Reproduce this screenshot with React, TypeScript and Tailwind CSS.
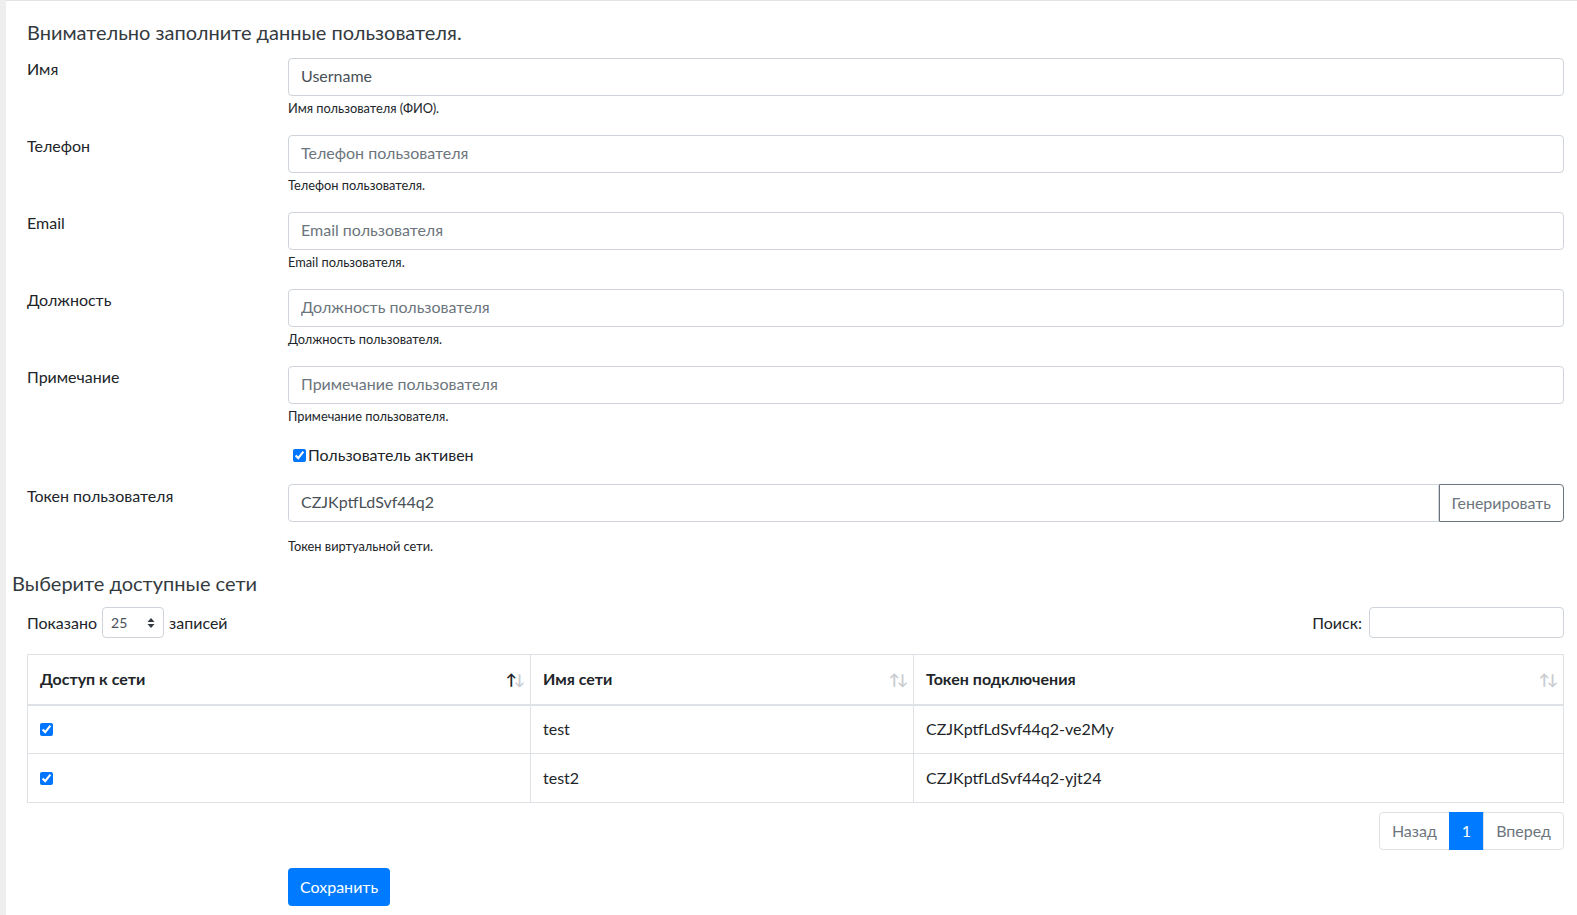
import { ReactNode } from "react";

const fields = [
  { label: "Имя", value: "Username", placeholder: "", help: "Имя пользователя (ФИО)." },
  { label: "Телефон", value: "", placeholder: "Телефон пользователя", help: "Телефон пользователя." },
  { label: "Email", value: "", placeholder: "Email пользователя", help: "Email пользователя." },
  { label: "Должность", value: "", placeholder: "Должность пользователя", help: "Должность пользователя." },
  { label: "Примечание", value: "", placeholder: "Примечание пользователя", help: "Примечание пользователя." },
];

const networks = [
  { name: "test", token: "CZJKptfLdSvf44q2-ve2My" },
  { name: "test2", token: "CZJKptfLdSvf44q2-yjt24" },
];

function SortIcon({ active }: { active?: boolean }) {
  return (
    <span className="flex text-[15px] leading-none tracking-[-3px]">
      <span className={active ? "text-[#212529]" : "text-[#c8cbcf]"}>↑</span>
      <span className="text-[#c8cbcf]">↓</span>
    </span>
  );
}

function Th({ children, active, className }: { children: ReactNode; active?: boolean; className?: string }) {
  return (
    <th className={`h-[50px] border-r border-[#dee2e6] pl-3 pr-[8px] text-left font-bold ${className ?? ""}`}>
      <div className="flex items-center justify-between">
        <span>{children}</span>
        <SortIcon active={active} />
      </div>
    </th>
  );
}

export default function App() {
  return (
    <div className="flex min-h-[915px] bg-white text-[16px] text-[#212529]" style={{ fontFamily: "Lato, 'Liberation Sans', sans-serif" }}>
      <div className="w-[6px] shrink-0 bg-[#eeeeee]" />
      <main className="flex-1 border-t border-[#e3e3e3] pl-[6px] pr-[13px]">
        <div className="pl-[15px]">
          <h4 className="mt-[19px] mb-[14px] text-[20px] leading-[24px] text-[#343a40]">
            Внимательно заполните данные пользователя.
          </h4>

          {fields.map((f) => (
            <div key={f.label} className="mb-[19px] flex">
              <label className="-mt-px w-[261px] shrink-0 leading-[24px]">{f.label}</label>
              <div className="flex-1">
                <input
                  className="h-[38px] w-full rounded border border-[#ced4da] px-3 pb-[3px] text-[#495057] placeholder:text-[#6c757d] outline-none"
                  defaultValue={f.value}
                  placeholder={f.placeholder}
                />
                <div className="mt-[4px] text-[12.8px] leading-[16px]">{f.help}</div>
              </div>
            </div>
          ))}

          <div className="flex">
            <div className="w-[261px] shrink-0" />
            <label className="flex items-center leading-[24px]">
              <input type="checkbox" defaultChecked className="mx-[2px] ml-[5px] h-[13px] w-[13px]" />
              <span>Пользователь активен</span>
            </label>
          </div>

          <div className="mt-[17px] flex">
            <label className="w-[261px] shrink-0 leading-[24px]">Токен пользователя</label>
            <div className="flex-1">
              <div className="flex">
                <input
                  className="h-[38px] flex-1 rounded-l border border-[#ced4da] px-3 pb-[3px] text-[#495057] outline-none"
                  defaultValue="CZJKptfLdSvf44q2"
                />
                <button className="h-[38px] rounded-r border border-[#6c757d] px-3 text-[#6c757d]">Генерировать</button>
              </div>
              <div className="mt-[16px] text-[12.8px] leading-[16px]">Токен виртуальной сети.</div>
            </div>
          </div>
        </div>

        <h4 className="mt-[17px] text-[20px] leading-[24px] text-[#343a40]">Выберите доступные сети</h4>

        <div className="pl-[15px]">
          <div className="mt-[12px] flex items-center justify-between">
            <div className="flex items-center gap-[5px]">
              <span>Показано</span>
              <div className="flex h-[31px] w-[62px] items-center justify-between rounded border border-[#ced4da] pl-[8px] pr-[8px] text-[14px] text-[#495057]">
                <span>25</span>
                <svg width="8" height="12" viewBox="0 0 8 12">
                  <path d="M4 1 L7.5 5 L0.5 5 Z M4 11 L7.5 7 L0.5 7 Z" fill="#343a40" />
                </svg>
              </div>
              <span>записей</span>
            </div>
            <div className="flex items-center gap-[7px]">
              <span>Поиск:</span>
              <input className="h-[31px] w-[195px] rounded border border-[#ced4da] outline-none" />
            </div>
          </div>

          <table className="mt-[16px] w-full border-collapse border border-[#dee2e6]">
            <thead>
              <tr className="border-b-2 border-[#dee2e6]">
                <Th active className="w-[503px]">Доступ к сети</Th>
                <Th className="w-[383px]">Имя сети</Th>
                <Th>Токен подключения</Th>
              </tr>
            </thead>
            <tbody>
              {networks.map((n) => (
                <tr key={n.name} className="h-[49px] border-t border-[#dee2e6]">
                  <td className="border-r border-[#dee2e6] px-3">
                    <input type="checkbox" defaultChecked className="block h-[13px] w-[13px]" />
                  </td>
                  <td className="border-r border-[#dee2e6] px-3">{n.name}</td>
                  <td className="px-3">{n.token}</td>
                </tr>
              ))}
            </tbody>
          </table>

          <div className="mt-[9px] flex justify-end">
            <div className="flex h-[38px] text-[#6c757d]">
              <span className="flex items-center rounded-l border border-[#dee2e6] px-3">Назад</span>
              <span className="-ml-px flex items-center border border-[#007bff] bg-[#007bff] px-3 text-white">1</span>
              <span className="-ml-px flex items-center rounded-r border border-[#dee2e6] px-3">Вперед</span>
            </div>
          </div>

          <div className="mt-[18px] pl-[261px]">
            <button className="h-[38px] rounded bg-[#007bff] px-3 text-white">Сохранить</button>
          </div>
        </div>
      </main>
    </div>
  );
}
